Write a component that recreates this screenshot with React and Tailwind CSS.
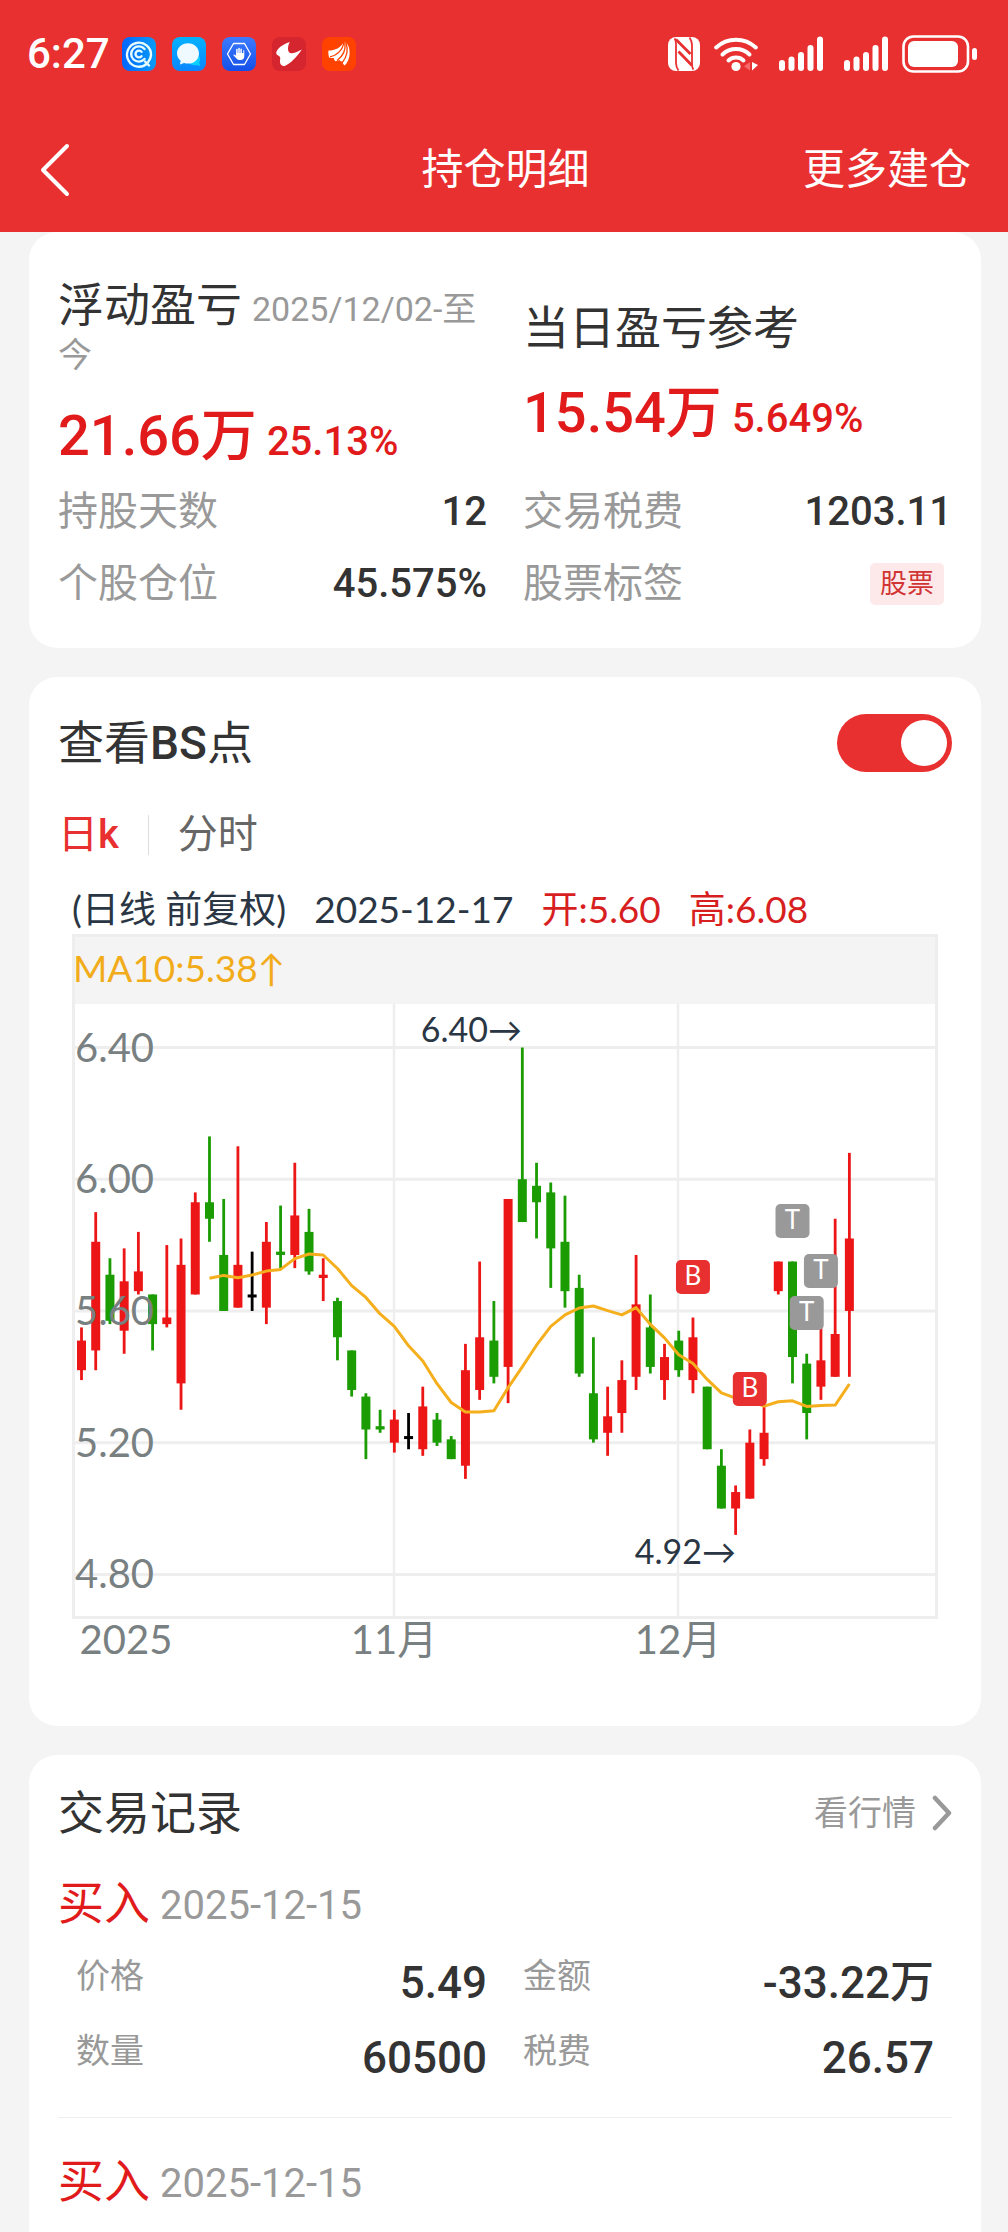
import { useState } from 'react';

// [high, body top, body bottom, low, direction]
// direction: u = close above open, d = close below open, e = unchanged
const CANDLES = [
  [5.55, 5.51, 5.42, 5.39, 'u'],
  [5.90, 5.81, 5.48, 5.42, 'u'],
  [5.76, 5.71, 5.57, 5.56, 'd'],
  [5.79, 5.69, 5.54, 5.47, 'u'],
  [5.84, 5.72, 5.66, 5.65, 'u'],
  [5.65, 5.65, 5.56, 5.48, 'd'],
  [5.80, 5.58, 5.56, 5.55, 'u'],
  [5.82, 5.74, 5.38, 5.30, 'u'],
  [5.96, 5.93, 5.65, 5.65, 'u'],
  [6.13, 5.93, 5.88, 5.81, 'd'],
  [5.94, 5.77, 5.60, 5.60, 'd'],
  [6.10, 5.74, 5.61, 5.61, 'u'],
  [5.78, 5.65, 5.65, 5.60, 'e'],
  [5.87, 5.81, 5.61, 5.56, 'u'],
  [5.92, 5.78, 5.77, 5.73, 'd'],
  [6.05, 5.89, 5.77, 5.73, 'u'],
  [5.91, 5.84, 5.72, 5.71, 'd'],
  [5.76, 5.71, 5.70, 5.63, 'u'],
  [5.64, 5.63, 5.52, 5.45, 'd'],
  [5.48, 5.48, 5.36, 5.34, 'd'],
  [5.35, 5.34, 5.24, 5.15, 'd'],
  [5.30, 5.25, 5.24, 5.23, 'd'],
  [5.30, 5.27, 5.20, 5.17, 'u'],
  [5.29, 5.22, 5.22, 5.18, 'e'],
  [5.37, 5.31, 5.18, 5.16, 'u'],
  [5.29, 5.27, 5.20, 5.19, 'd'],
  [5.22, 5.21, 5.15, 5.15, 'd'],
  [5.50, 5.42, 5.13, 5.09, 'u'],
  [5.75, 5.52, 5.36, 5.33, 'u'],
  [5.63, 5.51, 5.40, 5.38, 'd'],
  [5.94, 5.94, 5.43, 5.32, 'u'],
  [6.40, 6.00, 5.87, 5.87, 'd'],
  [6.05, 5.98, 5.93, 5.82, 'd'],
  [5.99, 5.96, 5.79, 5.67, 'd'],
  [5.95, 5.81, 5.66, 5.61, 'd'],
  [5.71, 5.67, 5.41, 5.40, 'd'],
  [5.52, 5.35, 5.21, 5.20, 'd'],
  [5.37, 5.28, 5.23, 5.16, 'u'],
  [5.45, 5.39, 5.29, 5.23, 'u'],
  [5.77, 5.62, 5.40, 5.36, 'u'],
  [5.65, 5.55, 5.43, 5.41, 'd'],
  [5.50, 5.46, 5.39, 5.33, 'u'],
  [5.54, 5.51, 5.42, 5.40, 'd'],
  [5.58, 5.52, 5.39, 5.35, 'u'],
  [5.37, 5.37, 5.18, 5.18, 'd'],
  [5.18, 5.13, 5.00, 5.00, 'd'],
  [5.07, 5.05, 5.00, 4.92, 'u'],
  [5.24, 5.20, 5.03, 5.03, 'u'],
  [5.31, 5.23, 5.15, 5.13, 'u'],
  [5.75, 5.75, 5.66, 5.65, 'u'],
  [5.75, 5.75, 5.46, 5.38, 'd'],
  [5.47, 5.44, 5.29, 5.21, 'd'],
  [5.56, 5.45, 5.37, 5.33, 'u'],
  [5.88, 5.53, 5.40, 5.40, 'u'],
  [6.08, 5.82, 5.60, 5.40, 'u'],
];

const COLORS = { u: '#ec1616', d: '#1a9c02', e: '#000000' };

// Trade markers: index of the day and vertical centre in chart units
const MARKERS = [
  { day: 43, y: 343, text: 'B' },
  { day: 47, y: 455, text: 'B' },
  { day: 50, y: 287, text: 'T' },
  { day: 52, y: 337, text: 'T' },
  { day: 51, y: 379, text: 'T' },
];

const PRICE_TICKS = [6.4, 6.0, 5.6, 5.2, 4.8];

const xOf = (i) => 9.5 + i * 14.22;
const yOf = (price) => 113.5 + (6.4 - price) * 329.3;

const closeOf = ([, top, bottom, , dir]) => (dir === 'd' ? bottom : top);

const ma10 = CANDLES.map((_, i) => {
  if (i < 9) return null;
  const sum = CANDLES.slice(i - 9, i + 1).reduce((acc, c) => acc + closeOf(c), 0);
  return `${xOf(i).toFixed(1)},${yOf(sum / 10).toFixed(1)}`;
}).filter(Boolean);

const RECORDS = [
  {
    id: 1,
    side: '买入',
    date: '2025-12-15',
    rows: [
      ['价格', '5.49', '金额', '-33.22万'],
      ['数量', '60500', '税费', '26.57'],
    ],
  },
  { id: 2, side: '买入', date: '2025-12-15', rows: [] },
];

function SignalIcon() {
  return (
    <svg viewBox="0 0 44 36" className="w-11 h-9" fill="#fff">
      <rect x="0" y="24" width="6" height="11" rx="3" />
      <rect x="9.5" y="20.5" width="6" height="14.5" rx="3" />
      <rect x="19" y="16" width="6" height="19" rx="3" />
      <rect x="28.5" y="9" width="6" height="26" rx="3" />
      <rect x="38" y="0.5" width="6" height="34.5" rx="3" />
    </svg>
  );
}

function StatusBar() {
  return (
    <div className="flex items-center justify-between h-[108px] pl-[27px] pr-[31px]">
      <div className="flex items-center gap-4">
        <span className="text-[42px] leading-none font-medium -mr-1">6:27</span>

        <svg viewBox="0 0 34 34" className="w-[34px] h-[34px]">
          <defs>
            <linearGradient id="browser" x1="0" y1="0" x2="1" y2="0">
              <stop offset="0" stopColor="#0066ff" />
              <stop offset="1" stopColor="#0b9bf5" />
            </linearGradient>
          </defs>
          <rect width="34" height="34" rx="8" fill="url(#browser)" />
          <g fill="none" stroke="#e4fbff" strokeWidth="2.4" strokeLinecap="round">
            <path d="M25.5 26.2A12 12 0 1 1 29 18.5c-.3 2.6-1.3 4.5-2.7 6.3M23 24.5l4 4" />
            <path d="M22.5 12A7.6 7.6 0 1 0 22.5 22" />
            <path d="M19.5 14.8A3.4 3.4 0 1 0 19.5 19.2" />
          </g>
        </svg>

        <svg viewBox="0 0 34 34" className="w-[34px] h-[34px]">
          <defs>
            <linearGradient id="chat" x1="0" y1="0" x2="0" y2="1">
              <stop offset="0" stopColor="#03b2ff" />
              <stop offset="1" stopColor="#0a86ff" />
            </linearGradient>
          </defs>
          <rect width="34" height="34" rx="8" fill="url(#chat)" />
          <path d="M27 19c1.5 2.5 1.2 5 .2 6.5l1 3.5-4.2-1c-3 .8-5.5-.5-6.5-2z" fill="#08d0ff" />
          <path d="M16 6.2c6.3 0 11 4.4 11 10.2s-4.7 10.2-11 10.2c-1.4 0-2.7-.2-3.9-.6L8 27.6l.6-4C6.4 21.8 5 19.3 5 16.4 5 10.6 9.7 6.2 16 6.2z" fill="#eefaff" />
        </svg>

        <svg viewBox="0 0 34 34" className="w-[34px] h-[34px]">
          <defs>
            <linearGradient id="guard" x1="0" y1="0" x2="0" y2="1">
              <stop offset="0" stopColor="#3c7bff" />
              <stop offset="1" stopColor="#1450e8" />
            </linearGradient>
          </defs>
          <rect width="34" height="34" rx="8" fill="url(#guard)" />
          <path d="M11.5 6.5h11L28.5 17l-6 10.5h-11L5.5 17z" fill="none" stroke="#fff" strokeWidth="1.3" strokeLinejoin="round" />
          <path d="M14.9 17v-4.5M17 17v-5.5M19.1 17v-4.8" stroke="#fff" strokeWidth="1.5" strokeLinecap="round" />
          <path d="M14.1 16h7.2v-2.5q.8-.8 1 0V19q0 4-3.8 4h-1.2q-1.6 0-2.8-1.6L11.2 18q.8-1 2 0l.9.8z" fill="#fff" />
        </svg>

        <svg viewBox="0 0 34 34" className="w-[34px] h-[34px]">
          <rect width="34" height="34" rx="8" fill="#d5252e" />
          <path d="M17.8 5C10 7.5 5 11.5 4.2 16c.3 2.8 4.8 2.5 4 6-.6 3-.3 6.5 4 7.2 6.5-2.8 12.8-9.7 17.6-16.8-4.5 2.6-8.5 4.2-11 3.8-3.6-.8-3.5-6.5-1-11.2z" fill="#fff" />
        </svg>

        <svg viewBox="0 0 34 34" className="w-[34px] h-[34px]">
          <rect width="34" height="34" rx="8" fill="#ff4200" />
          <path d="M6.5 13.5C13 13.5 19 10.5 21.5 5.2 25 5 28 9.5 27.6 17c-.2 4.5-2 8.8-5 11.5-1.3-1-2-2.2-2-3.8-1.5 0-2.4-.6-2.9-1.7-1.2.7-2.6 1.2-4 1.3-1-.6-1.8-1.8-1.9-3.3-1.5.2-3 .1-4.5-.3-.9-2-1.2-4.7-.8-7.2z" fill="#fff" />
          <g fill="none" stroke="#ff4200" strokeWidth="1.3">
            <path d="M8 19.8C15 18.5 21 13 21.8 5" />
            <path d="M15 23.5C20.5 19.5 24 13 22.8 5.5" />
            <path d="M20 26C24.5 20.5 26.5 13 24 6" />
          </g>
        </svg>
      </div>

      <div className="flex items-center gap-[21px]">
        <div className="flex items-center gap-[14px]">
          <svg viewBox="0 0 32 34" className="w-8 h-[34px]">
            <rect width="32" height="34" rx="8" fill="#fff" />
            <g fill="none" stroke="#e93030">
              <path d="M6.5 1.5Q8 3 8 8v18q0 4 2.5 7.5M25.5 32.5Q24 31 24 26V8q0-4-2.5-7.5" strokeWidth="1.8" />
              <path d="M8 2.5L22.5 17M10.5 14.5L24 28.5" strokeWidth="2.8" />
            </g>
          </svg>
          <svg viewBox="0 0 44 36" className="w-11 h-9">
            <g fill="none" stroke="#fff" strokeWidth="4" strokeLinecap="round">
              <path d="M2.2 11.5a29 29 0 0 1 39.6 0" />
              <path d="M8.5 18.5a19.5 19.5 0 0 1 27 0" />
              <path d="M14.5 24.5a11 11 0 0 1 15 0" />
            </g>
            <circle cx="22" cy="30.5" r="4.6" fill="#fff" />
            <path d="M36 26v8.5l-6-4.2z" fill="#f7696c" />
            <path d="M38 26v8.5l6-5.5z" fill="#fff" />
          </svg>
        </div>
        <SignalIcon />
        <div className="flex items-center gap-[14px]">
          <SignalIcon />
          <svg viewBox="0 0 75 38" className="w-[75px] h-[38px]">
            <rect x="1.5" y="1.5" width="64.5" height="35" rx="10" fill="none" stroke="#fff" strokeWidth="2.6" />
            <rect x="6" y="6" width="50" height="26" rx="6" fill="#fff" />
            <rect x="70" y="13" width="5" height="12" rx="2.5" fill="#fff" />
          </svg>
        </div>
      </div>
    </div>
  );
}

function Header() {
  return (
    <header className="bg-[#e93030] text-white">
      <StatusBar />
      <nav className="grid grid-cols-[1fr_auto_1fr] items-center h-[124px] pl-10 pr-[37px]">
        <button type="button" aria-label="返回" className="justify-self-start cursor-pointer">
          <svg viewBox="0 0 30 54" className="w-[30px] h-[54px]" fill="none" stroke="#fff" strokeWidth="4" strokeLinecap="round" strokeLinejoin="round">
            <path d="M27 3L3 27l24 24" />
          </svg>
        </button>
        <h1 className="text-[42px] leading-none">持仓明细</h1>
        <button type="button" className="justify-self-end text-[42px] leading-none cursor-pointer">更多建仓</button>
      </nav>
    </header>
  );
}

function Stat({ label, children }) {
  return (
    <div className="flex items-center justify-between h-[72px] text-[40px]">
      <dt className="text-[#999]">{label}</dt>
      <dd className="font-medium">{children}</dd>
    </div>
  );
}

function Amount({ value, percent }) {
  return (
    <p className="mt-[26px] text-[56px] leading-[72px] font-medium text-[#e11b1b] whitespace-nowrap">
      {value}
      <span className="ml-[10px] text-[40px] leading-none">{percent}</span>
    </p>
  );
}

function SummaryCard() {
  return (
    <section className="rounded-[28px] bg-white px-[29px] pt-[50px] pb-7">
      <div className="grid grid-cols-2 gap-x-9 items-center">
        <div>
          <h2 className="text-[46px] leading-[46px]">
            浮动盈亏
            <span className="ml-[10px] text-[34px] leading-none text-[#999]">2025/12/02-至今</span>
          </h2>
          <Amount value="21.66万" percent="25.13%" />
        </div>
        <div>
          <h2 className="text-[46px] leading-[46px]">当日盈亏参考</h2>
          <Amount value="15.54万" percent="5.649%" />
        </div>
      </div>
      <dl className="grid grid-cols-2 gap-x-9 mt-1">
        <Stat label="持股天数">12</Stat>
        <Stat label="交易税费">1203.11</Stat>
        <Stat label="个股仓位">45.575%</Stat>
        <Stat label="股票标签">
          <span className="block mr-2 px-[10px] rounded-[5px] bg-[#fde9e9] text-[27px] leading-[42px] font-normal text-[#d13434]">股票</span>
        </Stat>
      </dl>
    </section>
  );
}

function KLineChart({ showMarkers }) {
  return (
    <svg viewBox="0 0 866 742" className="block w-full h-auto font-['Lato','Noto_Sans_CJK_SC',sans-serif]">
      <rect x="0" y="2" width="866" height="68" fill="#f4f4f4" />
      <g stroke="#eeeeee" strokeWidth="3" fill="none">
        {PRICE_TICKS.map((p) => (
          <path key={p} d={`M0 ${yOf(p)}H865`} />
        ))}
        <path d="M322 70V683M606 70V683" strokeWidth="2.5" />
        <rect x="1.5" y="1.5" width="863" height="682" />
      </g>

      <text x="1" y="48" fontSize="37" fill="#f2ac1b">MA10:5.38↑</text>

      {CANDLES.map(([high, top, bottom, low, dir], i) => {
        const bodyHeight = Math.max(yOf(bottom) - yOf(top), 3);
        return (
          <g key={i} fill={COLORS[dir]}>
            <rect x={xOf(i) - 1.4} y={yOf(high)} width="2.8" height={yOf(low) - yOf(high)} />
            <rect x={xOf(i) - 4.5} y={yOf(top)} width="9" height={bodyHeight} />
          </g>
        );
      })}

      <polyline points={ma10.join(' ')} fill="none" stroke="#f5ae1c" strokeWidth="3" strokeLinejoin="round" />

      <g fontSize="40" fill="#798081">
        {PRICE_TICKS.map((p) => (
          <text key={p} x="3" y={yOf(p) + 14}>{p.toFixed(2)}</text>
        ))}
        <text x="54" y="720" textAnchor="middle">2025</text>
        <text x="322" y="720" textAnchor="middle">11月</text>
        <text x="606" y="720" textAnchor="middle">12月</text>
      </g>

      <g fontSize="34" fill="#2a3643" textAnchor="end">
        <text x="450" y="108">6.40→</text>
        <text x="664" y="630">4.92→</text>
      </g>

      {showMarkers && MARKERS.map(({ day, y, text }) => (
        <g key={day}>
          <rect x={xOf(day) - 17} y={y - 17} width="34" height="34" rx="5" fill={text === 'B' ? '#e93030' : '#999999'} />
          <text x={xOf(day)} y={y + 8} fontSize="26" fill="#fff" textAnchor="middle">{text}</text>
        </g>
      ))}
    </svg>
  );
}

function ChartCard() {
  const [showMarkers, setShowMarkers] = useState(true);
  const [period, setPeriod] = useState('day');

  return (
    <section className="rounded-[28px] bg-white px-[29px] pt-[37px] pb-[50px]">
      <div className="flex items-center justify-between h-[58px]">
        <label htmlFor="bs-switch" className="text-[46px] leading-none">
          查看<span className="font-medium">BS</span>点
        </label>
        <input
          id="bs-switch"
          type="checkbox"
          checked={showMarkers}
          onChange={(e) => setShowMarkers(e.target.checked)}
          className="appearance-none flex items-center w-[115px] h-[58px] px-[5px] rounded-full bg-[#ccc] checked:bg-[#e93030] checked:justify-end before:block before:w-[46px] before:h-[46px] before:rounded-full before:bg-white cursor-pointer"
        />
      </div>

      <div className="flex mt-[43px] h-10 text-[40px] leading-10">
        <button
          type="button"
          onClick={() => setPeriod('day')}
          className={`pr-[29px] border-r border-[#ddd] cursor-pointer ${period === 'day' ? 'text-[#e93030]' : 'text-[#666]'}`}
        >
          日<span className="font-medium">k</span>
        </button>
        <button
          type="button"
          onClick={() => setPeriod('minute')}
          className={`pl-[29px] cursor-pointer ${period === 'minute' ? 'text-[#e93030]' : 'text-[#666]'}`}
        >
          分时
        </button>
      </div>

      <div className="mt-[29px] px-[14px]">
        <p className="flex gap-7 text-[37px] leading-[50px] whitespace-nowrap text-[#2a3643] font-['Lato','Noto_Sans_CJK_SC',sans-serif]">
          <span>(日线 前复权)</span>
          <span>2025-12-17</span>
          <span className="text-[#d81f1f]">开:5.60</span>
          <span className="text-[#d81f1f]">高:6.08</span>
        </p>
        <KLineChart showMarkers={showMarkers} />
      </div>
    </section>
  );
}

function RecordCell({ label, value }) {
  return (
    <div className="flex items-start justify-between h-[75px]">
      <dt className="text-[34px] leading-[60px] text-[#999]">{label}</dt>
      <dd className="text-[44px] leading-[75px] font-medium">{value}</dd>
    </div>
  );
}

function TradeRecords() {
  return (
    <section className="flex-1 rounded-t-[28px] bg-white px-[29px] pt-[31px]">
      <div className="flex items-center justify-between h-[54px]">
        <h2 className="text-[46px] leading-none">交易记录</h2>
        <button type="button" className="flex items-center gap-4 text-[34px] leading-none text-[#999] cursor-pointer">
          看行情
          <svg viewBox="0 0 20 36" className="w-5 h-9" fill="none" stroke="#999" strokeWidth="4.5" strokeLinecap="round" strokeLinejoin="round">
            <path d="M3 3l14 15L3 33" />
          </svg>
        </button>
      </div>

      {RECORDS.map(({ id, side, date, rows }) => (
        <article key={id} className="pt-10 border-b border-[#eee] last:border-b-0">
          <h3 className="text-[46px] leading-[46px] text-[#e11b1b]">
            {side}
            <span className="ml-[10px] text-[40px] leading-none text-[#999]">{date}</span>
          </h3>
          {rows.length > 0 && (
            <div className="mt-5 pb-[21px]">
              {rows.map(([leftLabel, leftValue, rightLabel, rightValue]) => (
                <dl key={leftLabel} className="grid grid-cols-2 gap-x-9">
                  <div className="pl-[18px]">
                    <RecordCell label={leftLabel} value={leftValue} />
                  </div>
                  <div className="pr-[18px]">
                    <RecordCell label={rightLabel} value={rightValue} />
                  </div>
                </dl>
              ))}
            </div>
          )}
        </article>
      ))}
    </section>
  );
}

export default function App() {
  return (
    <div className="flex flex-col min-h-screen bg-[#f4f4f4] text-[#333] font-['Roboto','Noto_Sans_CJK_SC',sans-serif]">
      <Header />
      <main className="flex flex-col flex-1 gap-[29px] pl-[29px] pr-[27px]">
        <SummaryCard />
        <ChartCard />
        <TradeRecords />
      </main>
    </div>
  );
}
